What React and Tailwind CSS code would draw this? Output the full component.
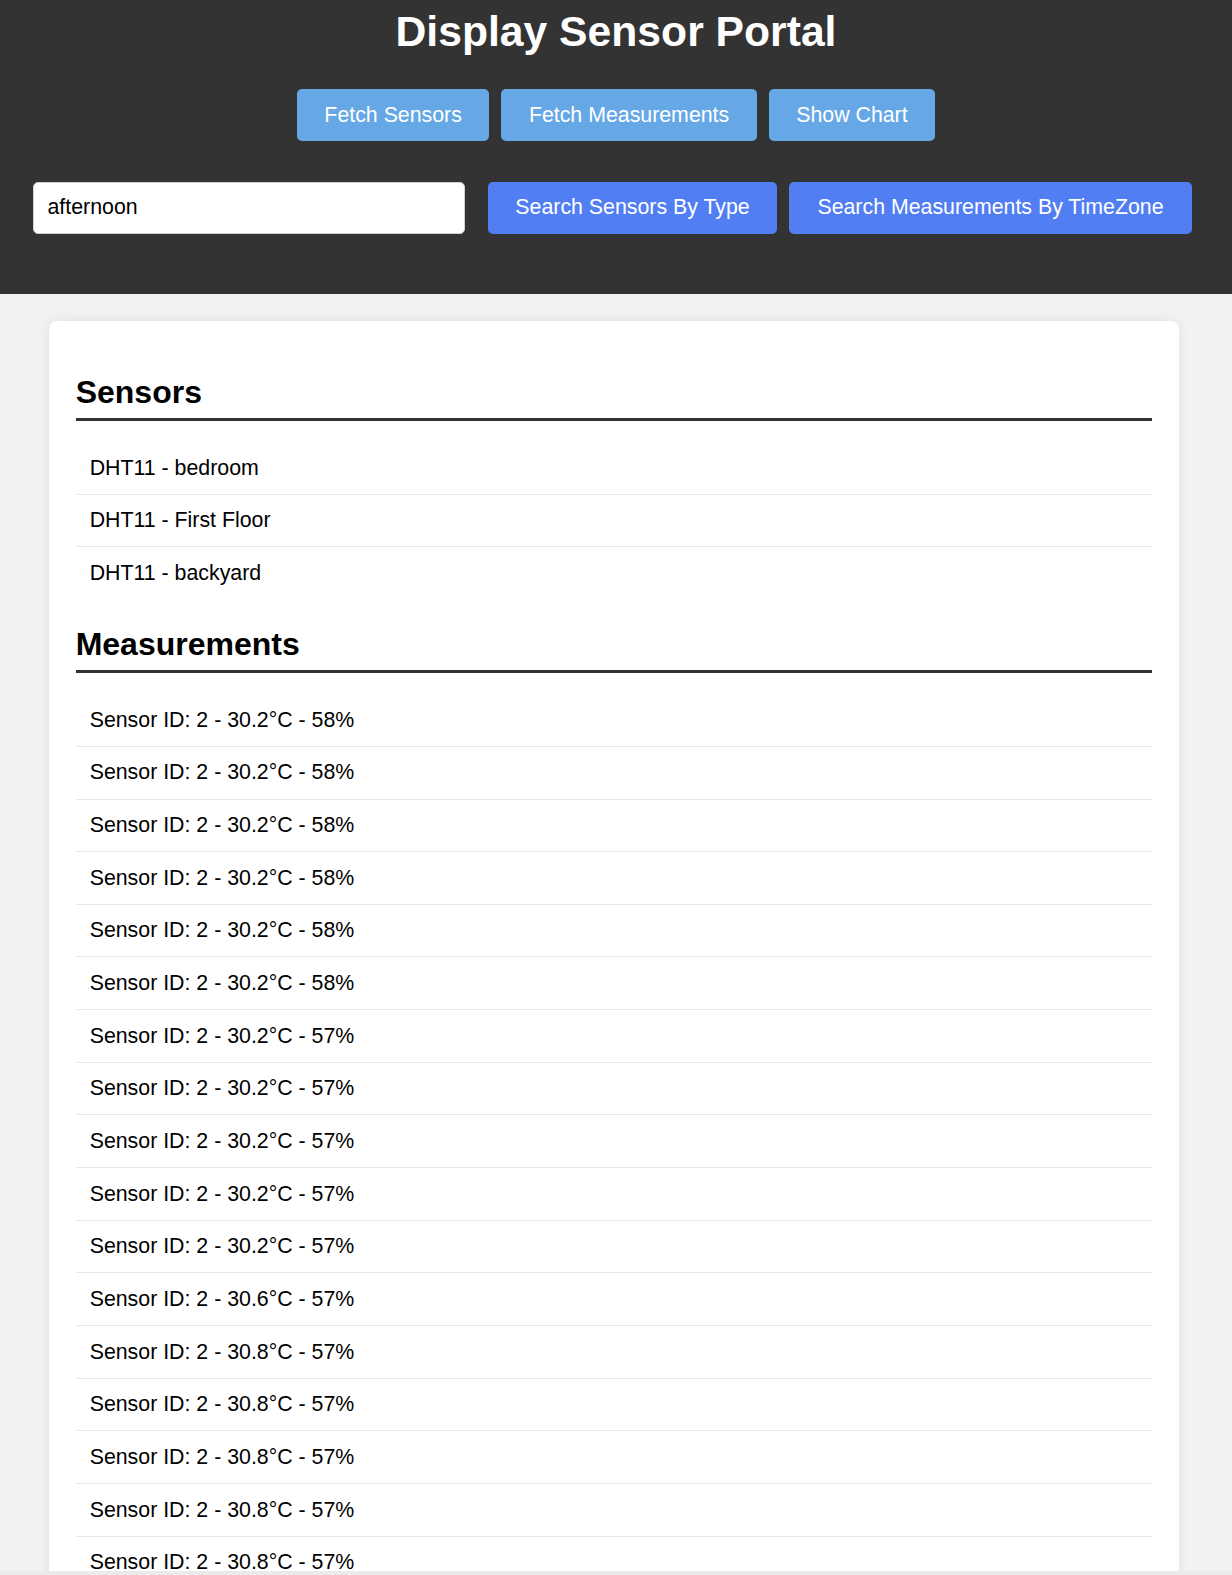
import React from 'react';

const sensors = ['DHT11 - bedroom', 'DHT11 - First Floor', 'DHT11 - backyard'];

const measurements = [
  ['30.2', '58'], ['30.2', '58'], ['30.2', '58'], ['30.2', '58'], ['30.2', '58'], ['30.2', '58'],
  ['30.2', '57'], ['30.2', '57'], ['30.2', '57'], ['30.2', '57'], ['30.2', '57'],
  ['30.6', '57'],
  ['30.8', '57'], ['30.8', '57'], ['30.8', '57'], ['30.8', '57'], ['30.8', '57'], ['30.8', '57'], ['30.8', '57'],
];

const Row = ({ children, last }) => (
  <li className={`h-[52.67px] flex items-center pl-[14px] text-[21.33px] leading-[24.5px] text-black ${last ? '' : 'border-b border-[#e6e6e6]'}`}>
    {children}
  </li>
);

const Section = ({ title, items }) => (
  <div>
    <h2 className="mt-[26.5px] text-[32px] leading-[36.8px] font-bold text-black pb-[6.67px] border-b-[3px] border-[#333]">{title}</h2>
    <ul className="mt-[21.33px]">
      {items.map((item, i) => (
        <Row key={i} last={i === items.length - 1}>{item}</Row>
      ))}
    </ul>
  </div>
);

const App = () => {
  return (
    <div className="min-h-screen bg-[#f2f2f2] pb-[40px]" style={{ fontFamily: '"Liberation Sans", Arial, sans-serif' }}>
      <header className="bg-[#333] h-[294px] flex flex-col">
        <h1 className="mt-[7px] text-center text-white font-bold text-[42.67px] leading-[49px]">Display Sensor Portal</h1>
        <div className="mt-[33px] flex justify-center gap-[12px]">
          {['Fetch Sensors', 'Fetch Measurements', 'Show Chart'].map((label) => (
            <button key={label} className="h-[52px] px-[27.5px] rounded-[5px] bg-[#66a8e5] text-white text-[21.33px] leading-[24.5px]">
              {label}
            </button>
          ))}
        </div>
        <div className="mt-[40.5px] pl-[33px] flex items-center">
          <input
            readOnly
            value="afternoon"
            className="w-[432px] h-[52px] rounded-[5px] bg-white border border-[#cfcfcf] px-[13.5px] text-[21.33px] text-black outline-none"
          />
          <button className="ml-[23px] w-[289px] h-[52px] rounded-[5px] bg-[#527ef4] text-white text-[21.33px] leading-[24.5px]">
            Search Sensors By Type
          </button>
          <button className="ml-[12px] w-[403px] h-[52px] rounded-[5px] bg-[#527ef4] text-white text-[21.33px] leading-[24.5px]">
            Search Measurements By TimeZone
          </button>
        </div>
      </header>

      <main className="mt-[27px] ml-[49px] w-[1130px] bg-white rounded-[8px] shadow-[0_0_12px_rgba(0,0,0,0.08)] px-[26.67px] pt-[26.67px] pb-[26px]">
        <Section title="Sensors" items={sensors} />
        <Section
          title="Measurements"
          items={measurements.map(([t, h]) => `Sensor ID: 2 - ${t}°C - ${h}%`)}
        />
      </main>

      <div className="fixed bottom-0 left-0 right-0 h-[4px] bg-[#ebebeb]" />
    </div>
  );
};

export default App;
